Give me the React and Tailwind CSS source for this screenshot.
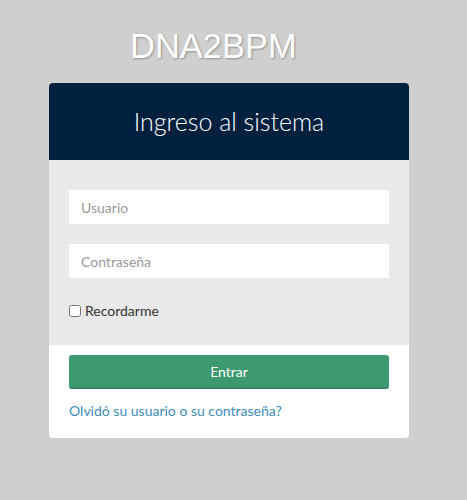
import React from 'react';

const App = () => {
  return (
    <div className="min-h-[500px] w-full bg-[#cfcfcf] pt-[24px]" style={{ fontFamily: 'Lato, "Noto Sans", sans-serif' }}>
      <div className="w-[360px] ml-[49px]">
        <h1
          className="h-[44px] pl-[81px] text-[34.5px] leading-[44px] text-white [text-shadow:1px_1px_2px_rgba(0,0,0,0.3)]"
          style={{ fontFamily: '"Liberation Sans", Arial, sans-serif' }}
        >
          DNA2BPM
        </h1>
        <div className="mt-[15px] rounded-[4px] overflow-hidden bg-white">
          <div className="h-[77px] bg-[#00203f] flex items-center justify-center">
            <span className="text-[25px] font-light text-white">Ingreso al sistema</span>
          </div>
          <div className="bg-[#e9e9eb] px-[20px] pt-[30px] pb-[24px]">
            <input
              type="text"
              placeholder="Usuario"
              className="block w-full h-[34px] bg-white px-[12px] text-[14px] text-[#555] placeholder:text-[#999] outline-none"
            />
            <input
              type="password"
              placeholder="Contraseña"
              className="block w-full h-[34px] bg-white mt-[20px] px-[12px] text-[14px] text-[#555] placeholder:text-[#999] outline-none"
            />
            <label className="flex items-center gap-[4px] mt-[22px] text-[14px] text-[#333]">
              <input type="checkbox" className="w-[12px] h-[12px] m-0" />
              <span>Recordarme</span>
            </label>
          </div>
          <div className="px-[20px] pt-[10px] pb-[17px]">
            <button className="w-full h-[34px] rounded-[3px] bg-[#3d9970] border-b-2 border-[#358563] text-[14px] text-white">
              Entrar
            </button>
            <a href="#" className="block mt-[11px] text-[14px] text-[#3c8dbc]">
              Olvidó su usuario o su contraseña?
            </a>
          </div>
        </div>
      </div>
    </div>
  );
};

export default App;
